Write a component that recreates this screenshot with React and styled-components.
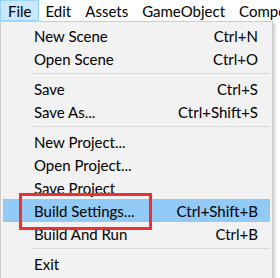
import React from "react";
import styled, { createGlobalStyle } from "styled-components";

const Global = createGlobalStyle`
  html, body { margin: 0; padding: 0; background: #ffffff; }
  body { width: 280px; height: 278px; overflow: hidden; font-family: "Lato", "Noto Sans", sans-serif; }
`;

const Page = styled.div`
  position: relative;
  width: 280px;
  height: 278px;
  overflow: hidden;
  background: #ffffff;
`;

const MenuBar = styled.div`
  display: flex;
  height: 21px;
  background: #ffffff;
  font-size: 15px;
  color: #000;
  white-space: nowrap;
`;

const BarItem = styled.div`
  box-sizing: border-box;
  height: 21px;
  padding: 0 6px 0 ${(p) => (p.$active ? "7px" : "6px")};
  display: flex;
  align-items: center;
  border: 1px solid ${(p) => (p.$active ? "#99D1FF" : "transparent")};
  background: ${(p) => (p.$active ? "#CCE8FF" : "transparent")};
`;

const Menu = styled.div`
  box-sizing: border-box;
  width: 273px;
  background: #F2F2F2;
  border: 1px solid #CCCCCC;
  box-shadow: 2px 2px 3px rgba(0, 0, 0, 0.2);
  padding: 2px 2px 3px 2px;
  font-size: 15px;
  color: #000;
`;

const Row = styled.div`
  display: flex;
  align-items: center;
  height: 23px;
  padding: 0 12px 0 31px;
  background: ${(p) => (p.$hover ? "#91C9F7" : "transparent")};
  white-space: nowrap;
`;

const Label = styled.span`
  flex: 1;
`;

const Shortcut = styled.span`
  text-align: right;
`;

const Separator = styled.div`
  height: 1px;
  margin: 3px 0 3px 28px;
  background: #D7D7D7;
`;

const Annotation = styled.div`
  position: absolute;
  left: 19px;
  top: 193px;
  width: 133px;
  height: 37px;
  box-sizing: border-box;
  border: 3px solid #EE2E31;
  pointer-events: none;
`;

const bar = ["File", "Edit", "Assets", "GameObject", "Component"];

const groups = [
  [
    ["New Scene", "Ctrl+N"],
    ["Open Scene", "Ctrl+O"],
  ],
  [
    ["Save", "Ctrl+S"],
    ["Save As...", "Ctrl+Shift+S"],
  ],
  [
    ["New Project...", ""],
    ["Open Project...", ""],
    ["Save Project", ""],
    ["Build Settings...", "Ctrl+Shift+B", true],
    ["Build And Run", "Ctrl+B"],
  ],
  [["Exit", ""]],
];

export default function App() {
  return (
    <Page>
      <Global />
      <MenuBar>
        {bar.map((b, i) => (
          <BarItem key={b} $active={i === 0}>
            {b}
          </BarItem>
        ))}
      </MenuBar>
      <Menu>
        {groups.map((g, gi) => (
          <React.Fragment key={gi}>
            {gi > 0 && <Separator />}
            {g.map(([l, s, h]) => (
              <Row key={l} $hover={h}>
                <Label>{l}</Label>
                <Shortcut>{s}</Shortcut>
              </Row>
            ))}
          </React.Fragment>
        ))}
      </Menu>
      <Annotation />
    </Page>
  );
}
